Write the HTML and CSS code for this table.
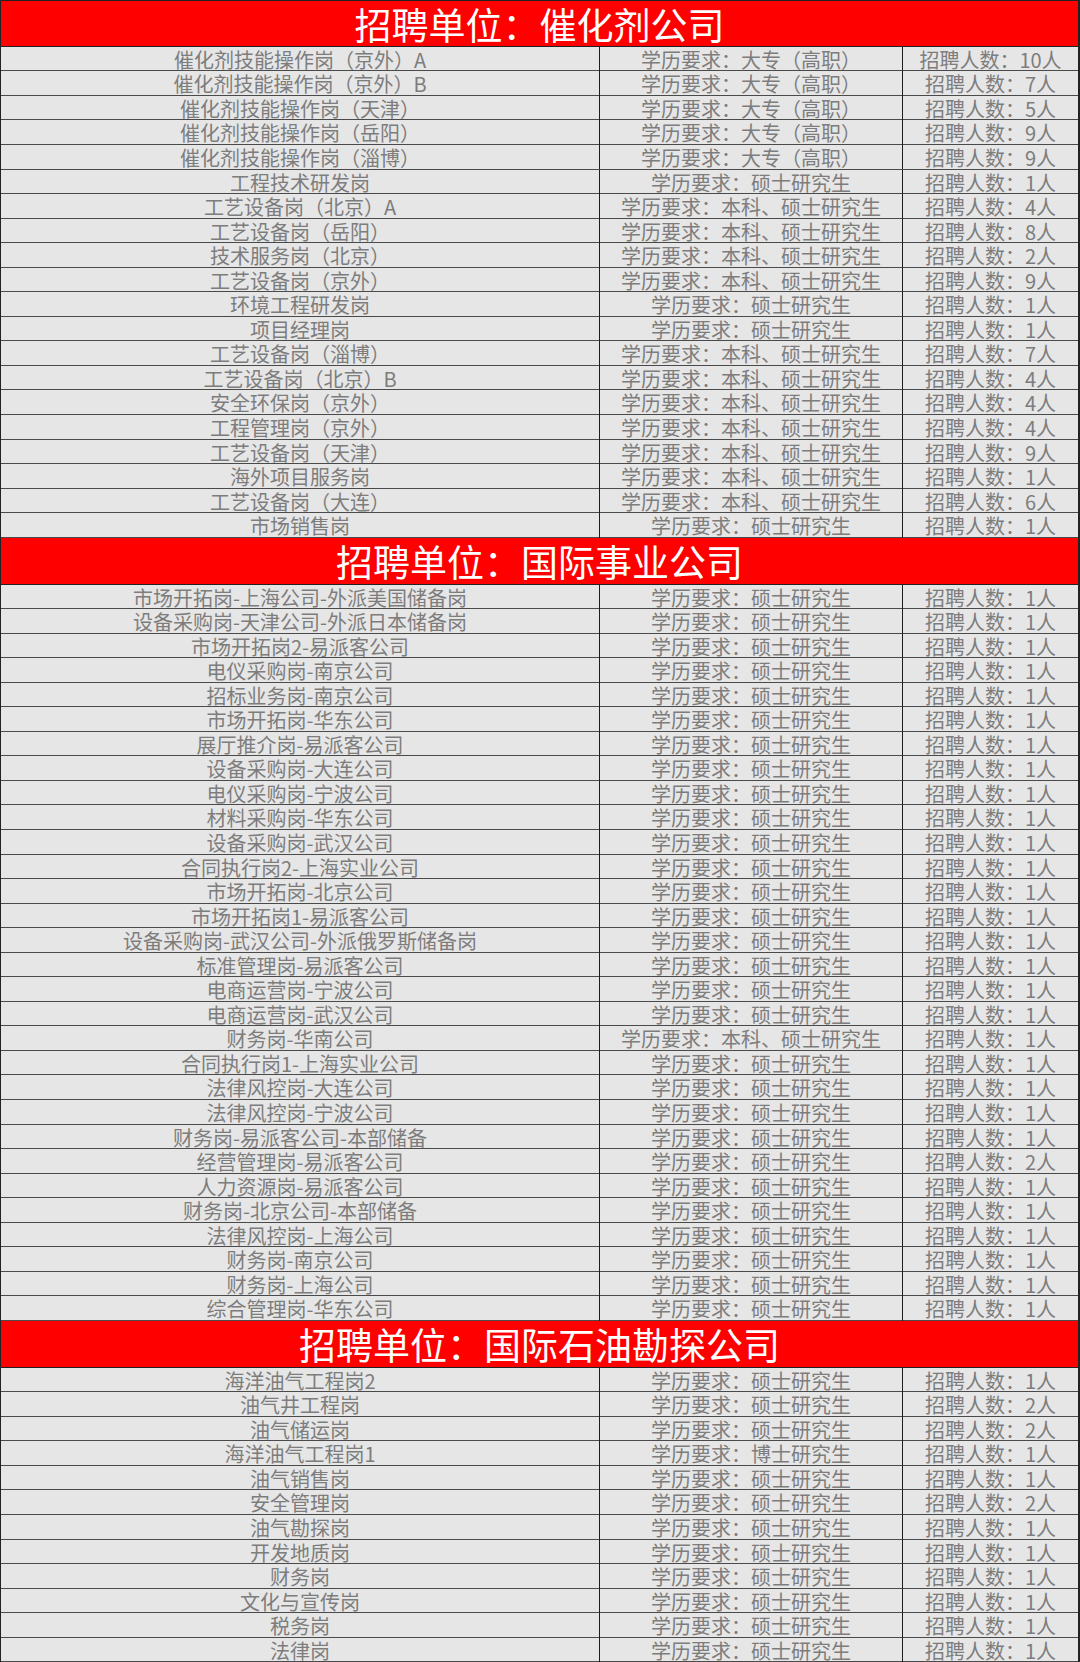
FILE: index.html
```html
<!DOCTYPE html>
<html lang="zh-CN">
<head>
<meta charset="utf-8">
<title>招聘单位</title>
<link rel="stylesheet" href="styles.css">
</head>
<body>
<div class="sheet">
  <div class="head">招聘单位：催化剂公司</div>
  <div class="row"><div class="c1">催化剂技能操作岗（京外）A</div><div class="c2">学历要求：大专（高职）</div><div class="c3">招聘人数：10人</div></div>
  <div class="row"><div class="c1">催化剂技能操作岗（京外）B</div><div class="c2">学历要求：大专（高职）</div><div class="c3">招聘人数：7人</div></div>
  <div class="row"><div class="c1">催化剂技能操作岗（天津）</div><div class="c2">学历要求：大专（高职）</div><div class="c3">招聘人数：5人</div></div>
  <div class="row"><div class="c1">催化剂技能操作岗（岳阳）</div><div class="c2">学历要求：大专（高职）</div><div class="c3">招聘人数：9人</div></div>
  <div class="row"><div class="c1">催化剂技能操作岗（淄博）</div><div class="c2">学历要求：大专（高职）</div><div class="c3">招聘人数：9人</div></div>
  <div class="row"><div class="c1">工程技术研发岗</div><div class="c2">学历要求：硕士研究生</div><div class="c3">招聘人数：1人</div></div>
  <div class="row"><div class="c1">工艺设备岗（北京）A</div><div class="c2">学历要求：本科、硕士研究生</div><div class="c3">招聘人数：4人</div></div>
  <div class="row"><div class="c1">工艺设备岗（岳阳）</div><div class="c2">学历要求：本科、硕士研究生</div><div class="c3">招聘人数：8人</div></div>
  <div class="row"><div class="c1">技术服务岗（北京）</div><div class="c2">学历要求：本科、硕士研究生</div><div class="c3">招聘人数：2人</div></div>
  <div class="row"><div class="c1">工艺设备岗（京外）</div><div class="c2">学历要求：本科、硕士研究生</div><div class="c3">招聘人数：9人</div></div>
  <div class="row"><div class="c1">环境工程研发岗</div><div class="c2">学历要求：硕士研究生</div><div class="c3">招聘人数：1人</div></div>
  <div class="row"><div class="c1">项目经理岗</div><div class="c2">学历要求：硕士研究生</div><div class="c3">招聘人数：1人</div></div>
  <div class="row"><div class="c1">工艺设备岗（淄博）</div><div class="c2">学历要求：本科、硕士研究生</div><div class="c3">招聘人数：7人</div></div>
  <div class="row"><div class="c1">工艺设备岗（北京）B</div><div class="c2">学历要求：本科、硕士研究生</div><div class="c3">招聘人数：4人</div></div>
  <div class="row"><div class="c1">安全环保岗（京外）</div><div class="c2">学历要求：本科、硕士研究生</div><div class="c3">招聘人数：4人</div></div>
  <div class="row"><div class="c1">工程管理岗（京外）</div><div class="c2">学历要求：本科、硕士研究生</div><div class="c3">招聘人数：4人</div></div>
  <div class="row"><div class="c1">工艺设备岗（天津）</div><div class="c2">学历要求：本科、硕士研究生</div><div class="c3">招聘人数：9人</div></div>
  <div class="row"><div class="c1">海外项目服务岗</div><div class="c2">学历要求：本科、硕士研究生</div><div class="c3">招聘人数：1人</div></div>
  <div class="row"><div class="c1">工艺设备岗（大连）</div><div class="c2">学历要求：本科、硕士研究生</div><div class="c3">招聘人数：6人</div></div>
  <div class="row"><div class="c1">市场销售岗</div><div class="c2">学历要求：硕士研究生</div><div class="c3">招聘人数：1人</div></div>

  <div class="head">招聘单位：国际事业公司</div>
  <div class="row"><div class="c1">市场开拓岗-上海公司-外派美国储备岗</div><div class="c2">学历要求：硕士研究生</div><div class="c3">招聘人数：1人</div></div>
  <div class="row"><div class="c1">设备采购岗-天津公司-外派日本储备岗</div><div class="c2">学历要求：硕士研究生</div><div class="c3">招聘人数：1人</div></div>
  <div class="row"><div class="c1">市场开拓岗2-易派客公司</div><div class="c2">学历要求：硕士研究生</div><div class="c3">招聘人数：1人</div></div>
  <div class="row"><div class="c1">电仪采购岗-南京公司</div><div class="c2">学历要求：硕士研究生</div><div class="c3">招聘人数：1人</div></div>
  <div class="row"><div class="c1">招标业务岗-南京公司</div><div class="c2">学历要求：硕士研究生</div><div class="c3">招聘人数：1人</div></div>
  <div class="row"><div class="c1">市场开拓岗-华东公司</div><div class="c2">学历要求：硕士研究生</div><div class="c3">招聘人数：1人</div></div>
  <div class="row"><div class="c1">展厅推介岗-易派客公司</div><div class="c2">学历要求：硕士研究生</div><div class="c3">招聘人数：1人</div></div>
  <div class="row"><div class="c1">设备采购岗-大连公司</div><div class="c2">学历要求：硕士研究生</div><div class="c3">招聘人数：1人</div></div>
  <div class="row"><div class="c1">电仪采购岗-宁波公司</div><div class="c2">学历要求：硕士研究生</div><div class="c3">招聘人数：1人</div></div>
  <div class="row"><div class="c1">材料采购岗-华东公司</div><div class="c2">学历要求：硕士研究生</div><div class="c3">招聘人数：1人</div></div>
  <div class="row"><div class="c1">设备采购岗-武汉公司</div><div class="c2">学历要求：硕士研究生</div><div class="c3">招聘人数：1人</div></div>
  <div class="row"><div class="c1">合同执行岗2-上海实业公司</div><div class="c2">学历要求：硕士研究生</div><div class="c3">招聘人数：1人</div></div>
  <div class="row"><div class="c1">市场开拓岗-北京公司</div><div class="c2">学历要求：硕士研究生</div><div class="c3">招聘人数：1人</div></div>
  <div class="row"><div class="c1">市场开拓岗1-易派客公司</div><div class="c2">学历要求：硕士研究生</div><div class="c3">招聘人数：1人</div></div>
  <div class="row"><div class="c1">设备采购岗-武汉公司-外派俄罗斯储备岗</div><div class="c2">学历要求：硕士研究生</div><div class="c3">招聘人数：1人</div></div>
  <div class="row"><div class="c1">标准管理岗-易派客公司</div><div class="c2">学历要求：硕士研究生</div><div class="c3">招聘人数：1人</div></div>
  <div class="row"><div class="c1">电商运营岗-宁波公司</div><div class="c2">学历要求：硕士研究生</div><div class="c3">招聘人数：1人</div></div>
  <div class="row"><div class="c1">电商运营岗-武汉公司</div><div class="c2">学历要求：硕士研究生</div><div class="c3">招聘人数：1人</div></div>
  <div class="row"><div class="c1">财务岗-华南公司</div><div class="c2">学历要求：本科、硕士研究生</div><div class="c3">招聘人数：1人</div></div>
  <div class="row"><div class="c1">合同执行岗1-上海实业公司</div><div class="c2">学历要求：硕士研究生</div><div class="c3">招聘人数：1人</div></div>
  <div class="row"><div class="c1">法律风控岗-大连公司</div><div class="c2">学历要求：硕士研究生</div><div class="c3">招聘人数：1人</div></div>
  <div class="row"><div class="c1">法律风控岗-宁波公司</div><div class="c2">学历要求：硕士研究生</div><div class="c3">招聘人数：1人</div></div>
  <div class="row"><div class="c1">财务岗-易派客公司-本部储备</div><div class="c2">学历要求：硕士研究生</div><div class="c3">招聘人数：1人</div></div>
  <div class="row"><div class="c1">经营管理岗-易派客公司</div><div class="c2">学历要求：硕士研究生</div><div class="c3">招聘人数：2人</div></div>
  <div class="row"><div class="c1">人力资源岗-易派客公司</div><div class="c2">学历要求：硕士研究生</div><div class="c3">招聘人数：1人</div></div>
  <div class="row"><div class="c1">财务岗-北京公司-本部储备</div><div class="c2">学历要求：硕士研究生</div><div class="c3">招聘人数：1人</div></div>
  <div class="row"><div class="c1">法律风控岗-上海公司</div><div class="c2">学历要求：硕士研究生</div><div class="c3">招聘人数：1人</div></div>
  <div class="row"><div class="c1">财务岗-南京公司</div><div class="c2">学历要求：硕士研究生</div><div class="c3">招聘人数：1人</div></div>
  <div class="row"><div class="c1">财务岗-上海公司</div><div class="c2">学历要求：硕士研究生</div><div class="c3">招聘人数：1人</div></div>
  <div class="row"><div class="c1">综合管理岗-华东公司</div><div class="c2">学历要求：硕士研究生</div><div class="c3">招聘人数：1人</div></div>

  <div class="head">招聘单位：国际石油勘探公司</div>
  <div class="row"><div class="c1">海洋油气工程岗2</div><div class="c2">学历要求：硕士研究生</div><div class="c3">招聘人数：1人</div></div>
  <div class="row"><div class="c1">油气井工程岗</div><div class="c2">学历要求：硕士研究生</div><div class="c3">招聘人数：2人</div></div>
  <div class="row"><div class="c1">油气储运岗</div><div class="c2">学历要求：硕士研究生</div><div class="c3">招聘人数：2人</div></div>
  <div class="row"><div class="c1">海洋油气工程岗1</div><div class="c2">学历要求：博士研究生</div><div class="c3">招聘人数：1人</div></div>
  <div class="row"><div class="c1">油气销售岗</div><div class="c2">学历要求：硕士研究生</div><div class="c3">招聘人数：1人</div></div>
  <div class="row"><div class="c1">安全管理岗</div><div class="c2">学历要求：硕士研究生</div><div class="c3">招聘人数：2人</div></div>
  <div class="row"><div class="c1">油气勘探岗</div><div class="c2">学历要求：硕士研究生</div><div class="c3">招聘人数：1人</div></div>
  <div class="row"><div class="c1">开发地质岗</div><div class="c2">学历要求：硕士研究生</div><div class="c3">招聘人数：1人</div></div>
  <div class="row"><div class="c1">财务岗</div><div class="c2">学历要求：硕士研究生</div><div class="c3">招聘人数：1人</div></div>
  <div class="row"><div class="c1">文化与宣传岗</div><div class="c2">学历要求：硕士研究生</div><div class="c3">招聘人数：1人</div></div>
  <div class="row"><div class="c1">税务岗</div><div class="c2">学历要求：硕士研究生</div><div class="c3">招聘人数：1人</div></div>
  <div class="row"><div class="c1">法律岗</div><div class="c2">学历要求：硕士研究生</div><div class="c3">招聘人数：1人</div></div>
</div>
</body>
</html>
```

FILE: styles.css
```css
html, body {
  margin: 0;
  padding: 0;
  background: #e6e6e6;
}

.sheet {
  width: 1080px;
  height: 1662px;
  box-sizing: border-box;
  border-left: 1px solid #222;
  border-right: 2px solid #222;
  border-top: 1px solid #222;
  background: #e6e6e6;
  font-family: "Noto Sans CJK SC", "Noto Sans", sans-serif;
  overflow: hidden;
}

.head {
  height: 46.8px;
  box-sizing: border-box;
  background: #ff0000;
  color: #ffffff;
  font-size: 37px;
  line-height: 45px;
  padding-top: 1px;
  text-align: center;
  border-bottom: 1px solid #222;
  white-space: nowrap;
}

.head:first-child {
  height: 45.8px;
}

.row {
  display: grid;
  grid-template-columns: 599px 303px 1fr;
  height: 24.55px;
  box-sizing: border-box;
  border-bottom: 1px solid #4a4a4a;
  color: #7d7d7d;
  font-size: 20px;
  line-height: 23.5px;
  white-space: nowrap;
}

.row > div {
  text-align: center;
  padding-top: 1px;
}

.c1, .c2 {
  border-right: 1px solid #1e1e1e;
}
```
